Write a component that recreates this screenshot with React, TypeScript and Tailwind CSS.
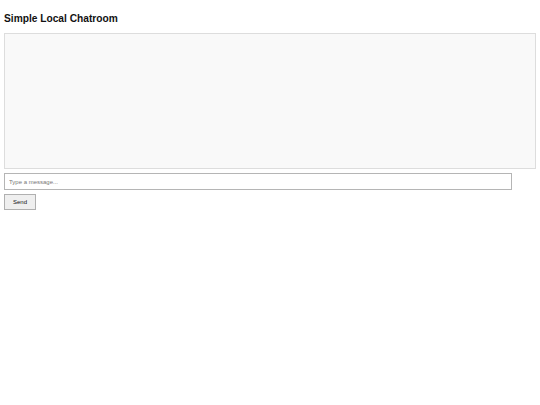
export default function App() {
  return (
    <div className="flex flex-col items-start bg-white min-h-[405px] px-[4px] pt-[12px] font-['Liberation_Sans',Arial,sans-serif]">
      <h2 className="text-[10.2px] font-bold text-[#111] leading-[13px]">Simple Local Chatroom</h2>
      <div className="mt-[8px] w-[532px] h-[136px] border border-[#dddddd] bg-[#f9f9f9]"></div>
      <input
        type="text"
        placeholder="Type a message..."
        className="mt-[4px] w-[508px] h-[17px] border border-[#b5b5b5] bg-white px-[4px] text-[6px] placeholder:text-[#777] outline-none font-['Liberation_Sans',Arial,sans-serif]"
      />
      <button className="mt-[4px] w-[32px] h-[16px] border border-[#b0b0b0] bg-[#efefef] text-[6px] text-[#111] leading-none font-['Liberation_Sans',Arial,sans-serif]">
        Send
      </button>
    </div>
  );
}
